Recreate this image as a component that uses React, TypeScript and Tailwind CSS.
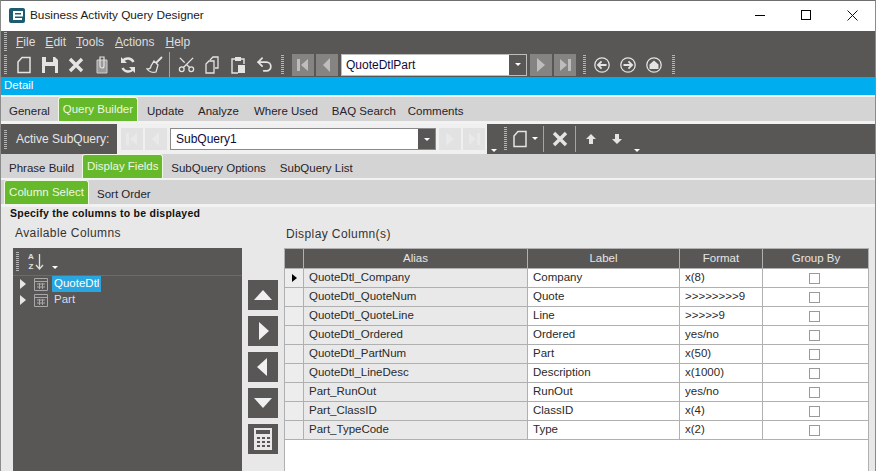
import { Scissors, Undo2 } from "lucide-react"
import type { ReactNode } from "react"

const rows = [
  ["QuoteDtl_Company", "Company", "x(8)"],
  ["QuoteDtl_QuoteNum", "Quote", ">>>>>>>>9"],
  ["QuoteDtl_QuoteLine", "Line", ">>>>>9"],
  ["QuoteDtl_Ordered", "Ordered", "yes/no"],
  ["QuoteDtl_PartNum", "Part", "x(50)"],
  ["QuoteDtl_LineDesc", "Description", "x(1000)"],
  ["Part_RunOut", "RunOut", "yes/no"],
  ["Part_ClassID", "ClassID", "x(4)"],
  ["Part_TypeCode", "Type", "x(2)"],
]

function Grip({ className = "" }: { className?: string }) {
  return (
    <div className={`h-[19px] w-[3px] shrink-0 bg-[repeating-linear-gradient(to_bottom,#b5b5b5_0,#b5b5b5_1px,transparent_1px,transparent_2px)] ${className}`} />
  )
}

function Slot({ w, children }: { w: number; children: ReactNode }) {
  return (
    <div className="flex h-full shrink-0 items-center justify-center" style={{ width: w }}>
      {children}
    </div>
  )
}

function Icon({ children, size = 20 }: { children: ReactNode; size?: number }) {
  return (
    <svg width={size} height={size} viewBox="0 0 20 20" fill="none" stroke="#e4e4e4" strokeWidth="1.5">
      {children}
    </svg>
  )
}

const PAGE = "M4 7 L8 2.5 H16 V17.5 H4 Z"

function Nav({ kind, faded }: { kind: "first" | "prev" | "next" | "last"; faded?: boolean }) {
  const fill = faded ? "#e9e9e9" : "#bdbdbd"
  return (
    <div className={`flex h-[22px] w-[22px] shrink-0 items-center justify-center ${faded ? "bg-[#e2e2e2]" : "bg-[#868482]"}`}>
      <svg width="14" height="14" viewBox="0 0 14 14" fill={fill}>
        {kind === "first" && <path d="M1 1h3v12H1zM12 1v12L5 7z" />}
        {kind === "prev" && <path d="M10 0v14L3 7z" />}
        {kind === "next" && <path d="M3 0v14l8-7z" />}
        {kind === "last" && <path d="M10 1h3v12h-3zM2 1v12l7-6z" />}
      </svg>
    </div>
  )
}

function Caret({ className = "" }: { className?: string }) {
  return <div className={`h-0 w-0 border-x-[3px] border-t-[3px] border-x-transparent border-t-white ${className}`} />
}

function Circle({ children }: { children: ReactNode }) {
  return (
    <Icon size={18}>
      <circle cx="10" cy="10" r="8" strokeWidth="1.4" />
      {children}
    </Icon>
  )
}

function Tab({ label, active, ml, w }: { label: string; active?: boolean; ml: number; w?: number }) {
  return (
    <div
      className={
        active
          ? "flex h-full shrink-0 items-start justify-center rounded-t-[3px] border border-b-0 border-[#eef8e2] bg-[#66b92a] pt-[3px] text-[#eef7e2]"
          : "flex h-full shrink-0 items-start pt-[6px] text-[#26232b]"
      }
      style={{ marginLeft: ml, width: w }}
    >
      {label}
    </div>
  )
}

function Square({ children }: { children: ReactNode }) {
  return <div className="flex h-[30px] w-[30px] items-center justify-center bg-[#595755]">{children}</div>
}

export default function App() {
  return (
    <div className="flex h-[471px] w-[876px] flex-col overflow-hidden border-x border-t border-x-[#8b8b8b] border-t-[#6f6f6f] bg-[#e8e8e8] font-['Liberation_Sans',sans-serif] text-[11.5px]">
      {/* title bar */}
      <div className="flex h-[30px] shrink-0 items-center bg-white pl-[8px] text-[#1a1a1a]">
        <div className="-mt-[1px] flex h-[15px] w-4 items-center justify-center rounded-[2px] bg-[#1d5c6e]">
          <svg width="11" height="11" viewBox="0 0 11 11" fill="none" stroke="#fff" strokeWidth="2">
            <path d="M10 9H2V2h8v3.5H2" />
          </svg>
        </div>
        <span className="ml-[5px] text-[11.8px]">Business Activity Query Designer</span>
        <div className="ml-auto flex h-full items-center pb-[2px]">
          <Slot w={46}>
            <div className="h-px w-[10px] bg-black" />
          </Slot>
          <Slot w={46}>
            <div className="h-[10px] w-[10px] border border-black" />
          </Slot>
          <Slot w={46}>
            <svg width="11" height="11" viewBox="0 0 11 11" stroke="#111">
              <path d="M.5.5l10 10M10.5.5l-10 10" />
            </svg>
          </Slot>
        </div>
      </div>

      {/* menu */}
      <div className="flex h-[21px] shrink-0 items-center bg-[#595755] pl-[3px] text-[12px] text-[#dedede]">
        <Grip className="h-[13px]" />
        <span className="ml-[9px]"><u>F</u>ile</span>
        <span className="ml-[10px]"><u>E</u>dit</span>
        <span className="ml-[10px]"><u>T</u>ools</span>
        <span className="ml-[11px]"><u>A</u>ctions</span>
        <span className="ml-[11px]"><u>H</u>elp</span>
      </div>

      {/* main toolbar */}
      <div className="flex h-[25px] shrink-0 items-center bg-[#595755] pl-[3px]">
        <Grip />
        <div className="ml-[4px] flex h-full">
          <Slot w={26}><Icon><path d={PAGE} /></Icon></Slot>
          <Slot w={26}>
            <Icon>
              <path d="M2 2h13l3 3v13H2z" fill="#e4e4e4" stroke="none" />
              <path d="M6 2h7v5H6zM5 11h10v7H5z" fill="#595755" stroke="none" />
            </Icon>
          </Slot>
          <Slot w={26}>
            <Icon><path d="M4 4l12 12M16 4L4 16" strokeWidth="3.4" /></Icon>
          </Slot>
          <Slot w={26}>
            <Icon>
              <path d="M5 5h10v13H5z" fill="#9a9a9a" stroke="#d0d0d0" strokeWidth="1" />
              <path d="M8 2h4v9a2 2 0 0 1-4 0z" stroke="#e4e4e4" strokeWidth="1.2" />
            </Icon>
          </Slot>
          <Slot w={26}>
            <Icon>
              <path d="M15.5 7A6.5 6.5 0 0 0 5 5.5M4.5 13A6.5 6.5 0 0 0 15 14.5" strokeWidth="2.4" />
              <path d="M3 2v6h6zM17 18v-6h-6z" fill="#e4e4e4" stroke="none" />
            </Icon>
          </Slot>
          <Slot w={26}>
            <Icon>
              <path d="M18 2l-6 6" strokeWidth="1.8" />
              <path d="M10 6l4 4-2 7c-3 1-7 0-9-3 3 0 4-1 4-3z" strokeWidth="1.3" />
            </Icon>
          </Slot>
        </div>
        <div className="ml-[2px] h-[25px] w-px bg-[#a5a5a5]" />
        <div className="ml-[3px] flex h-full">
          <Slot w={26}><Scissors size={19} color="#e4e4e4" strokeWidth={1.6} className="-scale-x-100 rotate-90" /></Slot>
          <Slot w={26}>
            <Icon>
              <path d="M8 5l3-3h5v11h-3" strokeWidth="1.3" />
              <path d="M4 9l3-3h5v12H4z" strokeWidth="1.3" />
            </Icon>
          </Slot>
          <Slot w={26}>
            <Icon>
              <path d="M7 4H4v14h6M13 4h3v5" strokeWidth="1.4" />
              <path d="M7 2h6v4H7z" fill="#e4e4e4" stroke="none" />
              <path d="M10 10h7v8h-7z" fill="#e4e4e4" stroke="none" />
            </Icon>
          </Slot>
          <Slot w={26}><Undo2 size={19} color="#e4e4e4" strokeWidth={2.2} /></Slot>
        </div>
        <Grip className="ml-[4px]" />
        <div className="ml-[8px] flex items-center gap-[2px]">
          <Nav kind="first" />
          <Nav kind="prev" />
          <div className="mx-px flex h-[22px] w-[186px] border border-[#bdbdbd] bg-white">
            <span className="flex-1 self-center pl-[4px] text-[12px] text-[#100b3c]">QuoteDtlPart</span>
            <div className="flex w-[17px] items-center justify-center bg-[#595755]"><Caret /></div>
          </div>
          <Nav kind="next" />
          <Nav kind="last" />
        </div>
        <Grip className="ml-[7px]" />
        <div className="ml-[3px] flex h-full">
          <Slot w={26}><Circle><path d="M15 10H6M9.5 6L5.500 10l4 4" strokeWidth="2" /></Circle></Slot>
          <Slot w={26}><Circle><path d="M5 10h9M10.5 6l4 4-4 4" strokeWidth="2" /></Circle></Slot>
          <Slot w={26}>
            <Circle><path d="M10 5l5 4.5v5H5v-5z" fill="#e4e4e4" stroke="none" /></Circle>
          </Slot>
        </div>
        <Grip className="ml-[5px]" />
      </div>

      {/* section header */}
      <div className="flex h-[18px] shrink-0 items-center bg-[#00aeef] pl-[3px] text-white">Detail</div>

      {/* top tabs */}
      <div className="flex h-[26px] shrink-0 border-t-2 border-t-[#f2f2f2] bg-[#d4d4d4]">
        <Tab label="General" ml={8} />
        <Tab label="Query Builder" ml={8} w={80} active />
        <Tab label="Update" ml={9} />
        <Tab label="Analyze" ml={14} />
        <Tab label="Where Used" ml={15} />
        <Tab label="BAQ Search" ml={14} />
        <Tab label="Comments" ml={12} />
      </div>

      {/* subquery toolbar */}
      <div className="flex h-[33px] shrink-0 border-t-[3px] border-t-[#f2f2f2] bg-[#595755]">
        <div className="flex w-[116px] items-center pl-[3px] text-[12px] text-[#e6e6e6]">
          <Grip />
          <span className="ml-[9px]">Active SubQuery:</span>
        </div>
        <div className="flex w-[370px] items-center gap-[2px] bg-[#f0f0f0] pl-[4px]">
          <Nav kind="first" faded />
          <Nav kind="prev" faded />
          <div className="mx-px flex h-[22px] w-[266px] border border-[#8a8a8a] bg-white">
            <span className="flex-1 self-center pl-[5px] text-[12px] text-[#100b3c]">SubQuery1</span>
            <div className="flex w-[17px] items-center justify-center bg-[#595755]"><Caret /></div>
          </div>
          <Nav kind="next" faded />
          <Nav kind="last" faded />
        </div>
        <div className="flex items-center">
          <Caret className="ml-[4px] mt-[22px]" />
          <Grip className="ml-[7px] h-[24px]" />
          <Slot w={25}><Icon size={20}><path d={PAGE} /></Icon></Slot>
          <Caret className="-mt-[2px]" />
          <div className="ml-[5px] h-[26px] w-px bg-[#a5a5a5]" />
          <Slot w={31}><Icon><path d="M4 4l12 12M16 4L4 16" strokeWidth="3.4" /></Icon></Slot>
          <div className="h-[26px] w-px bg-[#a5a5a5]" />
          <Slot w={30}>
            <svg width="10" height="10" viewBox="0 0 10 10" fill="#e4e4e4"><path d="M5 0l5 5H7v5H3V5H0z" /></svg>
          </Slot>
          <Slot w={22}>
            <svg width="10" height="10" viewBox="0 0 10 10" fill="#e4e4e4"><path d="M5 10l5-5H7V0H3v5H0z" /></svg>
          </Slot>
          <Caret className="ml-[6px] mt-[22px]" />
        </div>
      </div>

      {/* second tabs */}
      <div className="flex h-[24px] shrink-0 bg-[#d4d4d4]">
        <Tab label="Phrase Build" ml={8} />
        <Tab label="Display Fields" ml={8} w={81} active />
        <Tab label="SubQuery Options" ml={8} />
        <Tab label="SubQuery List" ml={14} />
      </div>

      {/* third tabs */}
      <div className="flex h-[26px] shrink-0 border-t-2 border-t-[#f2f2f2] bg-[#d4d4d4]">
        <Tab label="Column Select" ml={3} w={85} active />
        <Tab label="Sort Order" ml={8} />
      </div>

      {/* content */}
      <div className="flex min-h-0 flex-1 flex-col border-t-[3px] border-t-[#f2f2f2] pl-[9px]">
        <div className="text-[10.5px] font-bold leading-[12px] tracking-[0.25px] text-[#111]">Specify the columns to be displayed</div>
        <div className="flex h-[29px] shrink-0 items-center text-[12px] tracking-[0.4px] text-[#333]">
          <span className="ml-[5px] -mt-[1px]">Available Columns</span>
          <span className="ml-[165px]">Display Column(s)</span>
        </div>
        <div className="flex min-h-0 flex-1">
          {/* tree */}
          <div className="ml-[3px] flex w-[229px] flex-col bg-[#595755]">
            <div className="flex h-[28px] shrink-0 items-center border-b border-b-[#6d6b69] pl-[3px]">
              <Grip className="h-[19px]" />
              <div className="ml-[9px] flex items-center gap-px">
                <span className="text-center text-[8px] font-bold leading-[9.5px] text-[#e0e0e0]">A<br />Z</span>
                <svg width="9" height="16" viewBox="0 0 9 16" fill="none" stroke="#e0e0e0" strokeWidth="1.3"><path d="M4.5 0v15M1 11l3.5 4 3.5-4" /></svg>
              </div>
              <Caret className="ml-[8px] mt-[12px]" />
            </div>
            {["QuoteDtl", "Part"].map((name, i) => (
              <div key={name} className="flex h-[16px] items-center pl-[7px]">
                <svg width="6" height="10" viewBox="0 0 6 10" fill="#e6e6e6"><path d="M0 0l6 5-6 5z" /></svg>
                <svg className="ml-[8px]" width="14" height="13" viewBox="0 0 14 13" fill="none" stroke="#a8a8a8">
                  <path d="M.5.5h13v12H.5zM.5 3.5h13" />
                  <path d="M3 6h8M3 9h8M5.5 5v6M8.5 5v6" />
                </svg>
                <span className={`ml-[4px] flex h-[16px] items-center px-[2px] ${i === 0 ? "bg-[#29a6df] text-white" : "text-[#d8dcec]"}`}>{name}</span>
              </div>
            ))}
          </div>

          {/* move buttons */}
          <div className="ml-[6px] flex w-[30px] shrink-0 flex-col gap-[6px] pt-[32px]">
            <Square><div className="h-0 w-0 border-x-[9px] border-b-[10px] border-x-transparent border-b-[#f0f0f0]" /></Square>
            <Square><div className="ml-[2px] h-0 w-0 border-y-[9px] border-l-[10px] border-y-transparent border-l-[#f0f0f0]" /></Square>
            <Square><div className="mr-[2px] h-0 w-0 border-y-[9px] border-r-[10px] border-y-transparent border-r-[#f0f0f0]" /></Square>
            <Square><div className="h-0 w-0 border-x-[9px] border-t-[10px] border-x-transparent border-t-[#f0f0f0]" /></Square>
            <Square>
              <svg width="20" height="22" viewBox="0 0 20 22">
                <path d="M1 0h18v22H1z" fill="#e8e8e8" />
                <path d="M3 2h14v4H3z" fill="#595755" />
                <path d="M4 9h3v2H4zM9 9h3v2H9zM14 9h3v2h-3zM4 13h3v2H4zM9 13h3v2H9zM14 13h3v2h-3zM4 17h3v2H4zM9 17h3v2H9zM14 17h3v2h-3z" fill="#595755" />
              </svg>
            </Square>
          </div>

          {/* grid */}
          <div className="ml-[6px] w-[585px] self-stretch border-x border-t border-x-[#b0b0b0] border-t-[#b0b0b0] bg-white text-[#2a2a2a]">
            <div className="grid h-[19px] grid-cols-[19px_224px_152px_83px_106px] bg-[#595755] text-center leading-[19px] text-[#e6e6e6]">
              <div className="border-r border-r-[#b0b0b0]" />
              <div className="border-r border-r-[#b0b0b0]">Alias</div>
              <div className="border-r border-r-[#b0b0b0]">Label</div>
              <div className="border-r border-r-[#b0b0b0]">Format</div>
              <div>Group By</div>
            </div>
            {rows.map((row, i) => (
              <div key={row[0]} className="grid h-[19px] grid-cols-[19px_224px_152px_83px_106px] border-t border-t-[#b0b0b0] leading-[17px] first-of-type:border-t-0">
                <div className="flex items-center justify-center border-r border-r-[#b0b0b0] bg-[#ededed]">
                  {i === 0 && <div className="h-0 w-0 border-y-[4px] border-l-[5px] border-y-transparent border-l-black" />}
                </div>
                <div className="border-r border-r-[#b0b0b0] bg-[#e9e9e9] pl-[5px]">{row[0]}</div>
                <div className="border-r border-r-[#b0b0b0] pl-[5px]">{row[1]}</div>
                <div className="border-r border-r-[#b0b0b0] pl-[5px]">{row[2]}</div>
                <div className="flex items-center justify-center pr-[4px]">
                  <div className="h-[11px] w-[11px] border border-[#9a9a9a] bg-white" />
                </div>
              </div>
            ))}
            <div className="h-px bg-[#b0b0b0]" />
          </div>
        </div>
      </div>
    </div>
  )
}
